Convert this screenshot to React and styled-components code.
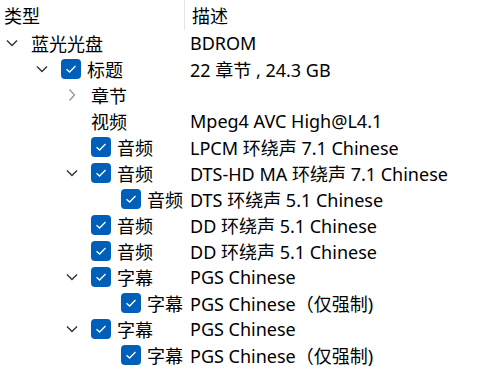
import React from "react";
import styled, { createGlobalStyle } from "styled-components";

const GlobalStyle = createGlobalStyle`
  html, body {
    margin: 0;
    padding: 0;
    background: #ffffff;
  }
  body {
    font-family: "Noto Sans", "Noto Sans CJK SC", sans-serif;
    font-size: 18px;
    color: #000;
  }
`;

const Tree = styled.div`
  width: 501px;
  height: 372px;
  overflow: hidden;
`;

const Header = styled.div`
  display: grid;
  grid-template-columns: 184px 1fr;
  height: 30px;
  align-items: center;
`;

const HeadCell = styled.div`
  height: 30px;
  display: flex;
  align-items: center;
  padding-left: ${(p) => (p.$last ? "7px" : "4px")};
  border-left: ${(p) => (p.$last ? "1px solid #e5e5e5" : "none")};
`;

const Row = styled.div`
  display: grid;
  grid-template-columns: 186px 1fr;
  height: 26px;
  align-items: center;
  white-space: nowrap;
`;

const TypeCell = styled.div`
  display: flex;
  align-items: center;
  padding-left: ${(p) => p.$level * 30}px;
`;

const Expander = styled.span`
  width: 32px;
  flex: none;
  display: flex;
  align-items: center;
  padding-left: 6px;
  box-sizing: border-box;
  color: ${(p) => (p.$open ? "#333" : "#9a9a9a")};
`;

const Check = styled.span`
  width: 20px;
  height: 20px;
  border-radius: 4px;
  background: #005fb8;
  margin-left: -1px;
  margin-right: 6px;
  display: flex;
  align-items: center;
  justify-content: center;
  flex: none;
`;

const Label = styled.span`
  margin-left: ${(p) => (p.$boxed ? "0" : "-1px")};
`;

const Desc = styled.div`
  padding-left: 4px;
`;

const Chevron = ({ open }) =>
  open ? (
    <svg width="12" height="8" viewBox="0 0 12 8">
      <path d="M1 1.5 L6 6.5 L11 1.5" fill="none" stroke="currentColor" strokeWidth="1.4" />
    </svg>
  ) : (
    <svg width="12" height="14" viewBox="0 0 12 14">
      <path d="M3.5 1.5 L8.5 7 L3.5 12.5" fill="none" stroke="currentColor" strokeWidth="1.4" />
    </svg>
  );

const Tick = () => (
  <svg width="12" height="10" viewBox="0 0 12 10">
    <path d="M1.5 5.2 L4.6 8 L10.5 2" fill="none" stroke="#fff" strokeWidth="1.3" />
  </svg>
);

const rows = [
  { level: 0, exp: "open", type: "蓝光光盘", desc: "BDROM" },
  { level: 1, exp: "open", check: true, type: "标题", desc: "22 章节 , 24.3 GB" },
  { level: 2, exp: "closed", type: "章节", desc: "" },
  { level: 2, type: "视频", desc: "Mpeg4 AVC High@L4.1" },
  { level: 2, check: true, type: "音频", desc: "LPCM 环绕声 7.1 Chinese" },
  { level: 2, exp: "open", check: true, type: "音频", desc: "DTS-HD MA 环绕声 7.1 Chinese" },
  { level: 3, check: true, type: "音频", desc: "DTS 环绕声 5.1 Chinese" },
  { level: 2, check: true, type: "音频", desc: "DD 环绕声 5.1 Chinese" },
  { level: 2, check: true, type: "音频", desc: "DD 环绕声 5.1 Chinese" },
  { level: 2, exp: "open", check: true, type: "字幕", desc: "PGS Chinese" },
  { level: 3, check: true, type: "字幕", desc: "PGS Chinese（仅强制)" },
  { level: 2, exp: "open", check: true, type: "字幕", desc: "PGS Chinese" },
  { level: 3, check: true, type: "字幕", desc: "PGS Chinese（仅强制)" },
];

const App = () => {
  return (
    <>
      <GlobalStyle />
      <Tree>
        <Header>
          <HeadCell>类型</HeadCell>
          <HeadCell $last>描述</HeadCell>
        </Header>
        {rows.map((r, i) => (
          <Row key={i}>
            <TypeCell $level={r.level}>
              <Expander $open={r.exp === "open"}>
                {r.exp && <Chevron open={r.exp === "open"} />}
              </Expander>
              {r.check && (
                <Check>
                  <Tick />
                </Check>
              )}
              <Label $boxed={r.check}>{r.type}</Label>
            </TypeCell>
            <Desc>{r.desc}</Desc>
          </Row>
        ))}
      </Tree>
    </>
  );
};

export default App;
